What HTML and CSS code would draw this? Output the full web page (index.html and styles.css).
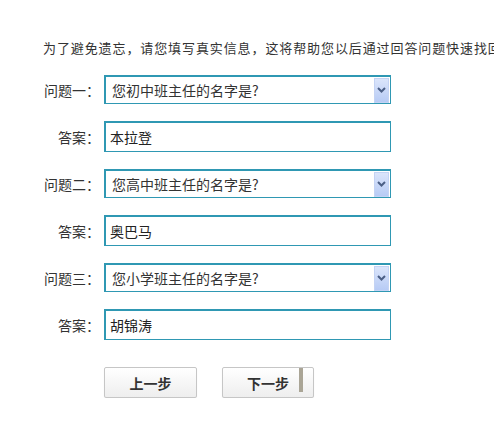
FILE: index.html
```html
<!DOCTYPE html>
<html lang="zh-CN">
<head>
    <meta charset="UTF-8">
    <title>密保问题</title>
    <link rel="stylesheet" href="styles.css">
</head>
<body>
    <div class="container">
        <p class="intro">为了避免遗忘，请您填写真实信息，这将帮助您以后通过回答问题快速找回</p>
        <form class="qa-form">
            <div class="row">
                <label class="label">问题一：</label>
                <div class="select-box">
                    <select class="select">
                        <option>您初中班主任的名字是?</option>
                    </select>
                    <span class="arrow"><svg width="9" height="6" viewBox="0 0 9 6"><path d="M1 1 L4.5 4.5 L8 1" fill="none" stroke="#4b5f86" stroke-width="2"/></svg></span>
                </div>
            </div>
            <div class="row">
                <label class="label">答案：</label>
                <input class="text-input" type="text" value="本拉登">
            </div>
            <div class="row">
                <label class="label">问题二：</label>
                <div class="select-box">
                    <select class="select">
                        <option>您高中班主任的名字是?</option>
                    </select>
                    <span class="arrow"><svg width="9" height="6" viewBox="0 0 9 6"><path d="M1 1 L4.5 4.5 L8 1" fill="none" stroke="#4b5f86" stroke-width="2"/></svg></span>
                </div>
            </div>
            <div class="row">
                <label class="label">答案：</label>
                <input class="text-input" type="text" value="奥巴马">
            </div>
            <div class="row">
                <label class="label">问题三：</label>
                <div class="select-box">
                    <select class="select">
                        <option>您小学班主任的名字是?</option>
                    </select>
                    <span class="arrow"><svg width="9" height="6" viewBox="0 0 9 6"><path d="M1 1 L4.5 4.5 L8 1" fill="none" stroke="#4b5f86" stroke-width="2"/></svg></span>
                </div>
            </div>
            <div class="row">
                <label class="label">答案：</label>
                <input class="text-input" type="text" value="胡锦涛">
            </div>
            <div class="buttons">
                <button type="button" class="btn">上一步</button>
                <button type="button" class="btn btn-next">下一步<span class="caret"></span></button>
            </div>
        </form>
    </div>
</body>
</html>
```

FILE: styles.css
```css
body {
    margin: 0;
    padding: 0;
    background: #fff;
    font-family: "Noto Sans CJK SC", "DejaVu Sans", sans-serif;
    color: #333;
}
.container {
    padding: 38px 0 0 0;
    width: 494px;
    overflow: hidden;
}
.intro {
    margin: 0 0 18px 43px;
    font-size: 13px;
    line-height: 19px;
    letter-spacing: 0.9px;
    white-space: nowrap;
}
.qa-form {
    display: flex;
    flex-direction: column;
    gap: 17px;
}
.row {
    display: flex;
    align-items: center;
}
.label {
    width: 104px;
    flex-shrink: 0;
    padding-right: 4px;
    box-sizing: border-box;
    text-align: right;
    font-size: 14px;
}
.select-box {
    display: flex;
    align-items: center;
    width: 287px;
    height: 29px;
    box-sizing: border-box;
    border: 2px solid #2f98b3;
    border-width: 2px 1px 1px 2px;
    padding-right: 1px;
}
.select {
    flex: 1;
    -webkit-appearance: none;
    appearance: none;
    border: none;
    outline: none;
    background: transparent;
    padding: 0 0 0 6px;
    font-family: "Noto Sans CJK SC", sans-serif;
    font-size: 14px;
    color: #333;
    height: 100%;
}
.arrow {
    width: 15px;
    height: 25px;
    box-sizing: border-box;
    border: 1px solid #c4d3f4;
    background: linear-gradient(#dbe5fb, #b7cbf5);
    display: flex;
    align-items: center;
    justify-content: center;
}
.text-input {
    width: 287px;
    height: 31px;
    box-sizing: border-box;
    border: 1px solid #2f98b3;
    border-width: 2px 1px 1px 2px;
    padding: 0 0 0 4px;
    margin: 0;
    font-family: "Noto Sans CJK SC", sans-serif;
    font-size: 14px;
    color: #222;
    outline: none;
}
.buttons {
    display: flex;
    gap: 25px;
    margin: 10px 0 0 104px;
}
.btn {
    position: relative;
    width: 93px;
    height: 31px;
    border: 1px solid #c6c6c6;
    border-radius: 2px;
    background: linear-gradient(#ffffff, #eeeeee);
    box-shadow: 0 1px 1px rgba(0, 0, 0, 0.08);
    font-family: "Noto Sans CJK SC", sans-serif;
    font-size: 14px;
    font-weight: bold;
    color: #333;
    padding: 0;
    cursor: pointer;
}
.btn-next {
    width: 92px;
}
.caret {
    position: absolute;
    top: 0;
    right: 10px;
    width: 4px;
    height: 24px;
    background: #aaa596;
}
```
